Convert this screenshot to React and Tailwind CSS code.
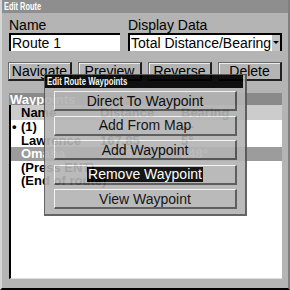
export default function App() {
  const mainBtn =
    "h-[19px] flex items-center justify-center text-[14px] leading-none text-black bg-[#b4b4b4] border-l border-t border-l-[#6a6a6a] border-t-[#6a6a6a] border-r-2 border-b-2 border-r-[#202020] border-b-[#202020] shadow-[inset_1px_1px_0_#ececec]";
  const dlgBtn =
    "h-[20px] flex items-center justify-center text-[14px] leading-none text-black bg-[#b4b4b4] border-l border-t border-l-[#f4f4f4] border-t-[#f4f4f4] border-r-2 border-b-2 border-r-[#505050] border-b-[#505050]";
  return (
    <div className="relative w-[290px] h-[290px] overflow-hidden bg-[#b4b4b4] font-['Liberation_Sans',Arial,sans-serif] text-black">
      <div className="flex flex-col w-[290px] h-[290px] border-l-2 border-l-[#d6d6d6] border-r-2 border-r-[#808080] border-b-2 border-b-black">
        {/* title bar */}
        <div className="h-[13px] shrink-0 bg-[#8e8e8e] flex items-center pl-[2px]">
          <span className="inline-block origin-left scale-x-[0.74] text-[10px] font-bold leading-none text-white whitespace-nowrap">
            Edit Route
          </span>
        </div>

        <div className="flex flex-col flex-1 pl-[7px] pr-[6px] pb-[9px]">
          {/* labels */}
          <div className="flex mt-[4px] h-[16px] text-[14px] leading-[16px]">
            <div className="w-[111px]">Name</div>
            <div className="ml-[8px]">Display Data</div>
          </div>
          {/* inputs */}
          <div className="flex h-[18px]">
            <div className="w-[111px] bg-white border-l-2 border-t-2 border-black flex items-center pl-[1px] text-[14px] leading-none">
              Route 1
            </div>
            <div className="ml-[8px] flex-1 flex bg-white border-l-2 border-t-2 border-black">
              <div className="flex-1 flex items-center pl-[1px] text-[14px] leading-none whitespace-nowrap">
                Total Distance/Bearing
              </div>
              <div className="w-[10px] bg-[#c4c4c4] border-r-2 border-r-black flex items-center justify-center">
                <svg width="6" height="4" viewBox="0 0 6 4">
                  <path d="M0 0 L6 0 L3 3 Z" fill="#000" />
                </svg>
              </div>
            </div>
          </div>
          {/* buttons */}
          <div className="grid grid-cols-4 gap-[6px] mt-[11px] -ml-[1px]">
            <div className={mainBtn}>Navigate</div>
            <div className={mainBtn}>Preview</div>
            <div className={mainBtn}>Reverse</div>
            <div className={mainBtn}>Delete</div>
          </div>
          {/* waypoints */}
          <div className="mt-[12px] h-[12px] bg-[#8a8a8a] flex items-center pl-[1px]">
            <span className="text-[13px] font-bold leading-none text-white">Waypoints</span>
          </div>
          <div className="flex-1 flex flex-col bg-white border-l-2 border-l-black border-b border-b-[#dedede] text-[13px] font-bold">
            <div className="h-[15px] bg-[#cccccc] flex items-center leading-none">
              <div className="w-[89px] pl-[10px]">Name</div>
              <div className="w-[81px]">Distance</div>
              <div>Bearing</div>
            </div>
            <div className="h-[13.5px] flex items-center leading-none">
              <div className="w-[10px] pl-[1px]">•</div>
              <div className="w-[79px]">(1)</div>
              <div className="w-[81px]">---</div>
              <div>---</div>
            </div>
            <div className="h-[13.5px] flex items-center leading-none">
              <div className="w-[89px] pl-[10px]">Lawrence</div>
              <div className="w-[81px]">167.85</div>
              <div>5°</div>
            </div>
            <div className="h-[13.5px] flex items-center leading-none bg-[#9c9c9c] text-white">
              <div className="w-[89px] pl-[10px]">Omaha</div>
              <div className="w-[81px]">183.60</div>
              <div>348°</div>
            </div>
            <div className="h-[13.5px] flex items-center leading-none">
              <div className="pl-[10px]">(Press ENT)</div>
            </div>
            <div className="h-[13.5px] flex items-center leading-none">
              <div className="pl-[10px]">(End of route)</div>
            </div>
          </div>
        </div>
      </div>

      {/* dialog overlay */}
      <div className="absolute left-[44px] top-[74px] w-[203px] h-[142px] flex flex-col bg-[#b4b4b4] opacity-[0.91] border border-[#555555] border-r-2 border-b-2">
        <div className="h-[13px] bg-black mr-[2px] flex items-center pl-[2px]">
          <span className="inline-block origin-left scale-x-[0.78] text-[10px] font-bold leading-none text-white whitespace-nowrap">
            Edit Route Waypoints
          </span>
        </div>
        <div className="flex flex-col gap-[4.5px] pt-[3px] pl-[9px] w-[192px]">
          <div className={dlgBtn}>Direct To Waypoint</div>
          <div className={dlgBtn}>Add From Map</div>
          <div className={dlgBtn}>Add Waypoint</div>
          <div className={dlgBtn}>
            <span className="bg-black text-white px-[1px] leading-[15px]">Remove Waypoint</span>
          </div>
          <div className={dlgBtn}>View Waypoint</div>
        </div>
      </div>
    </div>
  );
}
